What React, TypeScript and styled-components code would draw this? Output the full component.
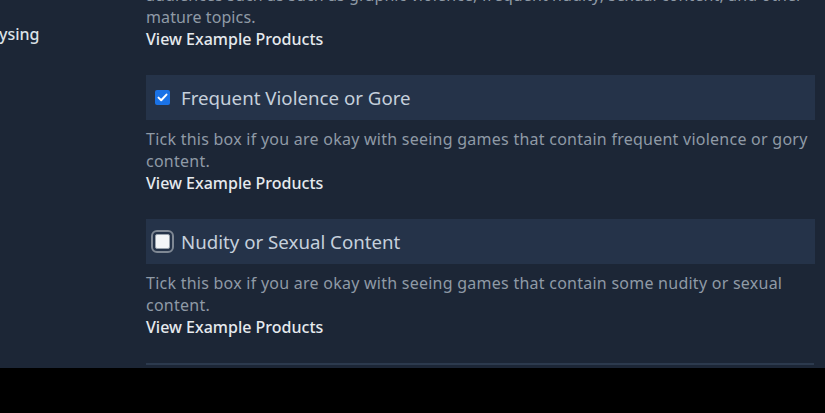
import React from "react";
import styled, { createGlobalStyle } from "styled-components";

const Global = createGlobalStyle`
  html, body { margin: 0; padding: 0; background: #000; }
  body { font-family: "Noto Sans", "Open Sans", sans-serif; }
`;

const Screen = styled.div`
  height: 368px;
  background: #1c2636;
  display: flex;
  overflow: hidden;
`;

const Nav = styled.div`
  width: 146px;
  flex-shrink: 0;
  padding-top: 20px;
  box-sizing: border-box;
`;

const NavItem = styled.div`
  font-size: 16px;
  line-height: 28px;
  font-weight: 500;
  color: #dde2e7;
  margin-left: -1px;
`;

const Main = styled.div`
  width: 669px;
  margin-top: -16px;
  display: flex;
  flex-direction: column;
`;

const Desc = styled.p<{ $spacing?: number }>`
  margin: 0;
  font-size: 16px;
  letter-spacing: ${(p) => p.$spacing ?? 0.25}px;
  line-height: 22px;
  color: #8f9aa6;
`;

const Link = styled.a`
  display: block;
  font-size: 16px;
  line-height: 23px;
  font-weight: 500;
  color: #e6eaee;
  cursor: pointer;
`;

const Option = styled.div`
  margin-top: 24px;
`;

const OptionRow = styled.label`
  height: 45px;
  background: #253349;
  display: flex;
  align-items: center;
  padding-left: 9px;
  gap: 11px;
  margin-bottom: 8px;
`;

const Box = styled.span<{ $checked: boolean }>`
  width: 15px;
  height: 15px;
  box-sizing: border-box;
  border-radius: 2px;
  display: flex;
  align-items: center;
  justify-content: center;
  background: ${(p) => (p.$checked ? "#1a72e6" : "#f4f6f8")};
  border: ${(p) => (p.$checked ? "none" : "1px solid #9aa3ad")};
  outline: ${(p) => (p.$checked ? "none" : "2px solid #7f8894")};
  outline-offset: 2px;
`;

const Label = styled.span`
  font-size: 18.7px;
  color: #c5d0dc;
  line-height: 24px;
`;

const Separator = styled.div`
  margin-top: 24px;
  height: 2px;
  background: #2c3a4e;
  margin-right: 1px;
`;

const Check = () => (
  <svg width="11" height="9" viewBox="0 0 11 9">
    <path d="M1.5 4.6 L4.2 7.2 L9.5 1.6" fill="none" stroke="#fff" strokeWidth="2" strokeLinecap="round" strokeLinejoin="round" />
  </svg>
);

const options = [
  {
    label: "Frequent Violence or Gore",
    checked: true,
    desc: "Tick this box if you are okay with seeing games that contain frequent violence or gory content.",
  },
  {
    label: "Nudity or Sexual Content",
    checked: false,
    desc: "Tick this box if you are okay with seeing games that contain some nudity or sexual content.",
  },
];

export default function App() {
  return (
    <>
      <Global />
      <Screen>
        <Nav>
          <NavItem>ysing</NavItem>
        </Nav>
        <Main>
          <Desc $spacing={0.1}>
            audiences such as such as graphic violence, frequent nudity, sexual content, and other mature topics.
          </Desc>
          <Link>View Example Products</Link>
          {options.map((o) => (
            <Option key={o.label}>
              <OptionRow>
                <Box $checked={o.checked}>{o.checked && <Check />}</Box>
                <Label>{o.label}</Label>
              </OptionRow>
              <Desc>{o.desc}</Desc>
              <Link>View Example Products</Link>
            </Option>
          ))}
          <Separator />
        </Main>
      </Screen>
    </>
  );
}
